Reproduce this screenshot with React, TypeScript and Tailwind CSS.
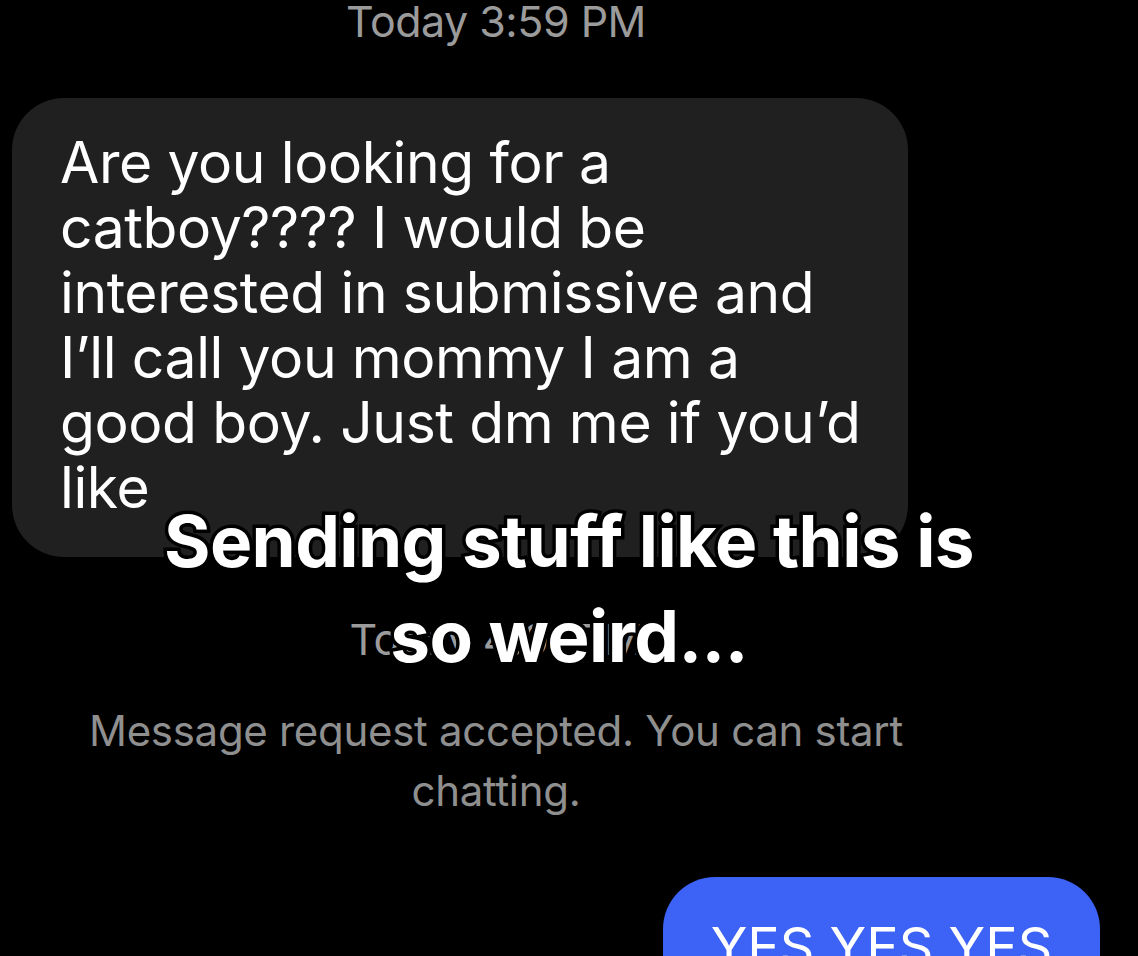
const font = { fontFamily: 'Inter, "Noto Sans", sans-serif' };

export default function App() {
  return (
    <div
      className="relative w-[1138px] h-[956px] overflow-hidden bg-black"
      style={font}
    >
      <div className="w-[992px] flex flex-col">
        <div className="text-center text-[43px] leading-[42px] text-[#9b9b9b] tracking-[-0.5px]">
          Today 3:59 PM
        </div>

        <div className="mt-[56px] ml-[12px] w-[896px] rounded-[52px] bg-[#202020] pl-[48px] pr-[30px] pt-[32px] pb-[37px]">
          <p className="text-[57px] leading-[65px] text-white tracking-[-0.4px]">
            Are you looking for a<br />
            catboy???? I would be<br />
            interested in submissive and<br />
            I’ll call you mommy I am a<br />
            good boy. Just dm me if you’d<br />
            like
          </p>
        </div>

        <div className="mt-[60px] text-center text-[43px] leading-[44px] text-[#9b9b9b] tracking-[-0.5px]">
          Today 4:01 PM
        </div>

        <div className="mt-[40px] text-center text-[42px] leading-[60px] text-[#8f8f8f] tracking-[-0.3px]">
          Message request accepted. You can start
          <br />
          chatting.
        </div>
      </div>

      <div className="flex justify-end pr-[38px] mt-[56px]">
        <div className="w-[437px] h-[140px] rounded-[52px] bg-[#3c62f6] pt-[40px] text-center text-[54px] leading-[60px] text-white">
          YES YES YES
        </div>
      </div>

      <div className="absolute left-0 right-0 top-[494px] text-center text-white font-bold text-[71px] leading-[95px] tracking-[-0.6px] [-webkit-text-stroke:7px_black] [paint-order:stroke_fill]">
        Sending stuff like this is
        <br />
        so weird...
      </div>
    </div>
  );
}
